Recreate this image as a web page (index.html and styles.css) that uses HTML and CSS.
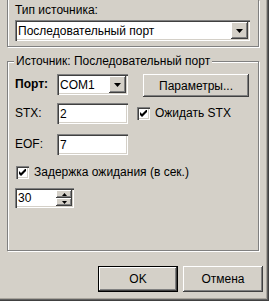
FILE: index.html
```html
<!DOCTYPE html>
<html lang="ru">
<head>
    <meta charset="UTF-8">
    <title>Источник</title>
    <link rel="stylesheet" href="styles.css">
</head>
<body>
    <div class="window">
        <div class="group source-type">
            <div class="caption">Тип источника:</div>
            <div class="combo combo-wide">
                <span class="combo-text">Последовательный порт</span>
                <span class="drop-btn">
                    <svg width="7" height="4" viewBox="0 0 7 4"><path d="M0 0h7l-3.5 4z" fill="#000"/></svg>
                </span>
            </div>
        </div>

        <fieldset class="group port-group">
            <legend>Источник: Последовательный порт</legend>

            <div class="row row-port">
                <span class="field-label bold">Порт:</span>
                <div class="combo combo-small">
                    <span class="combo-text">COM1</span>
                    <span class="drop-btn">
                        <svg width="7" height="4" viewBox="0 0 7 4"><path d="M0 0h7l-3.5 4z" fill="#000"/></svg>
                    </span>
                </div>
                <button class="btn btn-params">Параметры...</button>
            </div>

            <div class="row row-stx">
                <span class="field-label">STX:</span>
                <div class="edit">2</div>
                <label class="check check-stx">
                    <span class="box">
                        <svg width="7" height="7" viewBox="0 0 7 7"><path d="M0 2 2 4 7 -1 7 2 2 7 0 5z" fill="#000"/></svg>
                    </span>
                    Ожидать STX
                </label>
            </div>

            <div class="row row-eof">
                <span class="field-label">EOF:</span>
                <div class="edit">7</div>
            </div>

            <label class="check check-delay">
                <span class="box">
                    <svg width="7" height="7" viewBox="0 0 7 7"><path d="M0 2 2 4 7 -1 7 2 2 7 0 5z" fill="#000"/></svg>
                </span>
                Задержка ожидания (в сек.)
            </label>

            <div class="spin">
                <span class="spin-text">30</span>
                <span class="spin-btns">
                    <span class="spin-btn">
                        <svg width="5" height="3" viewBox="0 0 5 3"><path d="M2.5 0 5 3H0z" fill="#000"/></svg>
                    </span>
                    <span class="spin-btn">
                        <svg width="5" height="3" viewBox="0 0 5 3"><path d="M0 0h5L2.5 3z" fill="#000"/></svg>
                    </span>
                </span>
            </div>
        </fieldset>

        <div class="actions">
            <button class="btn btn-default">OK</button>
            <button class="btn">Отмена</button>
        </div>
    </div>
</body>
</html>
```

FILE: styles.css
```css
body {
    margin: 0;
    background: #d4d0c8;
    color: #000;
    font: 12px "Liberation Sans", Arial, sans-serif;
}

.window {
    width: 269px;
    height: 301px;
    box-sizing: border-box;
    padding-left: 7px;
    background: #d4d0c8;
    box-shadow: inset -1px -1px #404040, inset -2px -2px #606060, inset -3px -3px #a8a49c;
    display: flex;
    flex-direction: column;
    overflow: hidden;
}

/* etched group frames */
.group {
    width: 252px;
    box-sizing: border-box;
    border: 1px solid #808080;
}

.source-type {
    border-top: 0;
    padding: 4px 7px 5px;
    box-shadow: inset 1px 0 #fff, 1px 1px #fff;
}

.caption {
    line-height: 13px;
    margin-bottom: 3px;
}

.port-group {
    margin: 8px 0 0;
    padding: 0 0 42px 7px;
    min-width: 0;
    box-shadow: inset 1px 1px #fff, 1px 1px #fff;
}

.port-group legend {
    padding: 0 2px;
    margin-left: -1px;
    line-height: 13px;
    background: #d4d0c8;
}

/* sunken fields */
.combo,
.edit,
.spin {
    display: flex;
    align-items: center;
    box-sizing: border-box;
    height: 21px;
    padding: 2px;
    background: #fff;
    box-shadow: inset 1px 1px #808080, inset 2px 2px #404040, inset -1px -1px #fff, inset -2px -2px #d4d0c8;
}

.combo-wide {
    width: 235px;
}

.combo-small {
    width: 71px;
}

.combo-text {
    flex: 1;
    padding-left: 1px;
    white-space: nowrap;
}

.drop-btn,
.spin-btn {
    display: flex;
    align-items: center;
    justify-content: center;
    background: #d4d0c8;
    box-shadow: inset -1px -1px #404040, inset 1px 1px #fff, inset -2px -2px #808080;
}

.drop-btn {
    width: 17px;
    height: 17px;
}

.drop-btn svg,
.spin-btn svg {
    display: block;
}

/* rows */
.row {
    display: flex;
    align-items: flex-start;
}

.field-label {
    width: 42px;
    line-height: 21px;
}

.bold {
    font-weight: bold;
}

.row-port {
    margin-top: 6px;
}

.row-stx {
    margin-top: 6px;
}

.row-eof {
    margin-top: 10px;
}

.edit {
    width: 71px;
    padding-left: 3px;
}

.check {
    display: flex;
    align-items: center;
    gap: 5px;
    line-height: 13px;
}

.box {
    width: 13px;
    height: 13px;
    box-sizing: border-box;
    display: flex;
    align-items: center;
    justify-content: center;
    background: #fff;
    box-shadow: inset 1px 1px #808080, inset 2px 2px #404040, inset -1px -1px #fff, inset -2px -2px #d4d0c8;
}

.check-stx {
    margin-left: 9px;
    margin-top: 4px;
}

.check-delay {
    margin: 11px 0 0 1px;
}

/* spinner */
.spin {
    width: 59px;
    height: 20px;
    margin-top: 9px;
    padding-left: 3px;
}

.spin-text {
    flex: 1;
}

.spin-btns {
    display: flex;
    flex-direction: column;
}

.spin-btn {
    width: 16px;
    height: 8px;
}

/* buttons */
.btn {
    font: inherit;
    color: #000;
    border: 0;
    padding: 0;
    background: #d4d0c8;
    height: 23px;
    box-shadow: inset -1px -1px #404040, inset 1px 1px #fff, inset -2px -2px #808080;
}

.btn-params {
    width: 106px;
    margin-left: 15px;
}

.actions {
    width: 256px;
    margin-top: 15px;
    display: flex;
    justify-content: flex-end;
    gap: 5px;
}

.actions .btn {
    width: 80px;
    height: 26px;
}

.btn-default {
    box-shadow: inset 0 0 0 1px #000, inset -2px -2px #404040, inset 2px 2px #fff, inset -3px -3px #808080;
}
```
